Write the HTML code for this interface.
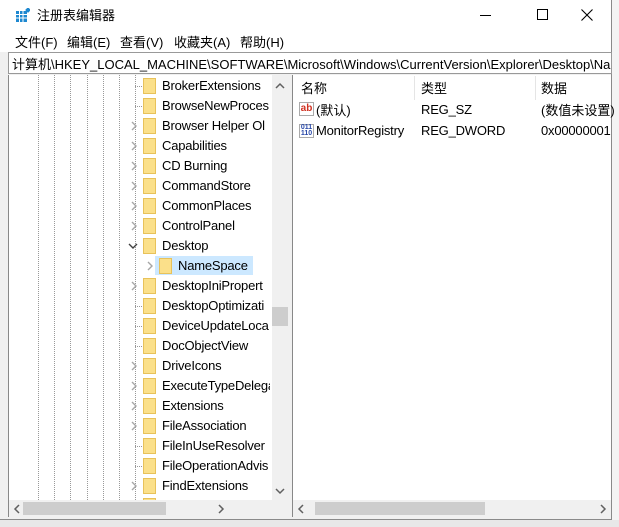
<!DOCTYPE html><html><head><meta charset="utf-8"><style>
*{margin:0;padding:0;box-sizing:border-box}
body{width:619px;height:527px;background:#f0f0f0;position:relative;overflow:hidden;font-family:"Liberation Sans","Noto Sans CJK SC",sans-serif;font-size:12.5px;color:#000}
.a{position:absolute}
.win{left:0;top:0;width:612px;height:520px;background:#f0f0f0;border:1px solid #8a8a8a;border-top:none;border-left:none}
.t{white-space:nowrap}
.fold{position:absolute;width:13px;height:16px;background:#fbe08a;border:1px solid #e8c25a}
.dv{position:absolute;width:0;border-left:1px dotted #999}
.dh{position:absolute;height:0;border-top:1px dotted #999;width:7px}
.ch{position:absolute}
.tt{font-size:13px;letter-spacing:-0.2px}
</style></head><body>
<div class="a" style="left:612px;top:0;width:7px;height:527px;background:#f4f4f4"></div>
<div class="a" style="left:0;top:520px;width:619px;height:7px;background:#e8e8e8"></div>
<div class="a win">
<div class="a" style="left:0;top:0;width:611px;height:30px;background:#fff"></div>
<svg class="a" style="left:16px;top:8px" width="14" height="14"><rect x="0" y="3" width="11" height="11" fill="#1e88d0"/><path d="M0 6.5h11M0 10h11M3.5 3v11M7 3v11" stroke="#fff" stroke-width="1"/><rect x="10" y="0" width="4" height="4" fill="#1e88d0" transform="rotate(45 12 2)"/></svg>
<div class="a t" style="left:37px;top:5px;font-size:13px">注册表编辑器</div>
<div class="a" style="left:480px;top:15px;width:11px;height:1px;background:#000"></div>
<div class="a" style="left:537px;top:9px;width:11px;height:11px;border:1px solid #000"></div>
<svg class="a" style="left:581px;top:9px" width="12" height="12"><path d="M0.5 0.5L11.5 11.5M11.5 0.5L0.5 11.5" stroke="#000" stroke-width="1.1"/></svg>
<div class="a" style="left:0;top:30px;width:611px;height:22px;background:#fff"></div>
<div class="a t" style="left:15px;top:32px;font-size:13px">文件(F)</div>
<div class="a t" style="left:67px;top:32px;font-size:13px">编辑(E)</div>
<div class="a t" style="left:120px;top:32px;font-size:13px">查看(V)</div>
<div class="a t" style="left:174px;top:32px;font-size:13px">收藏夹(A)</div>
<div class="a t" style="left:240px;top:32px;font-size:13px">帮助(H)</div>
<div class="a" style="left:8px;top:52px;width:604px;height:22px;background:#fff;border:1px solid #999;overflow:hidden"><div class="t" style="position:absolute;left:3px;top:1px;font-size:13px">计算机\HKEY_LOCAL_MACHINE\SOFTWARE\Microsoft\Windows\CurrentVersion\Explorer\Desktop\NameSpace</div></div>
<div class="a" style="left:8px;top:75px;width:280px;height:442px;background:#fff;border-left:1px solid #888;overflow:hidden">
<div class="dv" style="left:29px;top:0;height:425px"></div>
<div class="dv" style="left:45px;top:0;height:425px"></div>
<div class="dv" style="left:61px;top:0;height:425px"></div>
<div class="dv" style="left:78px;top:0;height:425px"></div>
<div class="dv" style="left:94px;top:0;height:425px"></div>
<div class="dv" style="left:110px;top:0;height:425px"></div>
<div class="dv" style="left:126px;top:0;height:425px"></div>
</div>
<div id="tree"></div>
<div class="a" style="left:272px;top:75px;width:16px;height:425px;background:#f0f0f0"></div>
<svg class="a" style="left:275px;top:82px" width="10" height="7"><path d="M1 6L5 2L9 6" stroke="#606060" stroke-width="1.5" fill="none"/></svg>
<svg class="a" style="left:275px;top:488px" width="10" height="7"><path d="M1 1L5 5L9 1" stroke="#606060" stroke-width="1.5" fill="none"/></svg>
<div class="a" style="left:272px;top:307px;width:16px;height:19px;background:#cdcdcd"></div>
<div class="a" style="left:9px;top:500px;width:279px;height:17px;background:#f0f0f0"></div>
<div class="a" style="left:23px;top:502px;width:143px;height:13px;background:#cdcdcd"></div>
<svg class="a" style="left:13px;top:504px" width="7" height="10"><path d="M6 1L2 5L6 9" stroke="#606060" stroke-width="1.5" fill="none"/></svg>
<svg class="a" style="left:218px;top:504px" width="7" height="10"><path d="M1 1L5 5L1 9" stroke="#606060" stroke-width="1.5" fill="none"/></svg>
<div class="a" style="left:292px;top:75px;width:319px;height:442px;background:#fff;border-left:1px solid #888"></div>
<div class="a" style="left:414px;top:76px;width:1px;height:24px;background:#e5e5e5"></div>
<div class="a" style="left:535px;top:76px;width:1px;height:24px;background:#e5e5e5"></div>
<div class="a t" style="left:301px;top:78px;font-size:13px">名称</div>
<div class="a t" style="left:421px;top:78px;font-size:13px">类型</div>
<div class="a t" style="left:541px;top:78px;font-size:13px">数据</div>
<div class="a" style="left:299px;top:102px;width:15px;height:14px;border:1px solid #aaa;background:#fff;color:#d03020;font-size:10px;font-weight:bold;line-height:11px;text-align:center">ab</div>
<div class="a t" style="left:316px;top:100px;font-size:13px">(默认)</div>
<div class="a t tt" style="left:421px;top:102px">REG_SZ</div>
<div class="a t" style="left:541px;top:100px;font-size:13px">(数值未设置)</div>
<div class="a" style="left:299px;top:124px;width:15px;height:14px;border:1px solid #aaa;background:#fff;color:#2848a8;font-size:7px;font-weight:bold;line-height:6px;text-align:center">011<br>110</div>
<div class="a t tt" style="left:316px;top:123px">MonitorRegistry</div>
<div class="a t tt" style="left:421px;top:123px">REG_DWORD</div>
<div class="a t tt" style="left:541px;top:123px">0x00000001</div>
<div class="a" style="left:293px;top:500px;width:318px;height:17px;background:#f0f0f0"></div>
<div class="a" style="left:315px;top:502px;width:170px;height:13px;background:#cdcdcd"></div>
<svg class="a" style="left:297px;top:504px" width="7" height="10"><path d="M6 1L2 5L6 9" stroke="#606060" stroke-width="1.5" fill="none"/></svg>
<svg class="a" style="left:600px;top:504px" width="7" height="10"><path d="M1 1L5 5L1 9" stroke="#606060" stroke-width="1.5" fill="none"/></svg>
</div>
<script>
var rows=[["BrokerExtensions",0],["BrowseNewProces",0],["Browser Helper Ol",1],["Capabilities",1],["CD Burning",1],["CommandStore",1],["CommonPlaces",1],["ControlPanel",1],["Desktop",2],["NameSpace",3],["DesktopIniPropert",1],["DesktopOptimizati",0],["DeviceUpdateLoca",0],["DocObjectView",0],["DriveIcons",1],["ExecuteTypeDelega",1],["Extensions",1],["FileAssociation",1],["FileInUseResolver",0],["FileOperationAdvis",0],["FindExtensions",1],["",0]];
var R='<svg class="ch" style="left:LLpx;top:TTpx" width="6" height="10"><path d="M1 1L5 5L1 9" stroke="#a6a6a6" stroke-width="1.4" fill="none"/></svg>';
var D='<svg class="ch" style="left:LLpx;top:TTpx" width="10" height="6"><path d="M1 1L5 5L9 1" stroke="#404040" stroke-width="1.4" fill="none"/></svg>';
var h="";
rows.forEach(function(r,i){var y=76+i*20;var n=r[0],k=r[1];
if(k==3){h+='<div class="a" style="left:155px;top:'+y+'px;width:98px;height:19px;background:#cce8ff"></div>'+R.replace('LL',147).replace('TT',y+5)+'<div class="fold" style="left:159px;top:'+(y+2)+'px"></div><div class="a t tt" style="left:178px;top:'+(y+2)+'px">'+n+'</div>';return;}
if(k==0)h+='<div class="dh" style="left:135px;top:'+(y+10)+'px"></div>';
if(k==1)h+=R.replace('LL',131).replace('TT',y+5);
if(k==2)h+=D.replace('LL',128).replace('TT',y+7);
h+='<div class="fold" style="left:143px;top:'+(y+2)+'px"></div><div class="a t tt" style="left:162px;top:'+(y+2)+'px;width:108px;overflow:hidden">'+n+'</div>';});
document.getElementById("tree").innerHTML=h;
</script>
</body></html>
